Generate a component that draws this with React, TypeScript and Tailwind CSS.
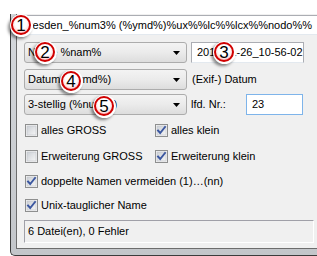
import React from "react";

function Badge({ n, x, y }: { n: number; x: number; y: number }) {
  return (
    <div
      className="absolute w-[23px] h-[23px] rounded-full bg-white shadow-[-2px_2px_3px_rgba(0,0,0,0.45)] p-[1.5px]"
      style={{ left: x - 11.5, top: y - 11.5 }}
    >
      <div className="w-full h-full rounded-full border-[2px] border-[#d00000] bg-[radial-gradient(circle_at_50%_40%,#ffffff_45%,#ffe0e0_65%,#f04040_100%)] flex items-center justify-center">
        <span className="text-[17px] leading-none text-black font-['Liberation_Sans',Arial,sans-serif] mt-[1px]">{n}</span>
      </div>
    </div>
  );
}

function Arrow() {
  return (
    <svg width="7" height="4" viewBox="0 0 7 4" className="shrink-0">
      <path d="M0 0 H7 L3.5 4 Z" fill="#000" />
    </svg>
  );
}

function Combo({ text }: { text: string }) {
  return (
    <div className="w-[163px] h-[21px] shrink-0 border border-[#acacac] rounded-[3px] bg-gradient-to-b from-[#f3f3f3] via-[#ebebeb] to-[#dddddd] flex items-center pl-[3px] pr-[6px]">
      <span className="flex-1 whitespace-nowrap overflow-hidden">{text}</span>
      <Arrow />
    </div>
  );
}

function Check({ checked }: { checked: boolean }) {
  return (
    <svg width="13" height="13" viewBox="0 0 13 13" className="shrink-0">
      <defs>
        <linearGradient id="cbg" x1="0" y1="0" x2="1" y2="1">
          <stop offset="0" stopColor="#cbcfd5" />
          <stop offset="1" stopColor="#f6f6f6" />
        </linearGradient>
      </defs>
      <rect x="0.5" y="0.5" width="12" height="12" fill="#f4f4f4" stroke="#8e8f8f" />
      <rect x="2" y="2" width="9" height="9" fill="url(#cbg)" stroke="#c0c4ca" strokeWidth="0.6" />
      {checked && (
        <path d="M3 6.5 L5.2 9 L10 3" fill="none" stroke="#3b57a0" strokeWidth="1.9" strokeLinecap="square" />
      )}
    </svg>
  );
}

function CB({ label, checked }: { label: string; checked: boolean }) {
  return (
    <div className="flex items-center h-[13px] whitespace-nowrap">
      <Check checked={checked} />
      <span className="ml-[3px]">{label}</span>
    </div>
  );
}

export default function App() {
  return (
    <div className="w-[317px] h-[256px] bg-white overflow-hidden relative font-['Liberation_Sans',Arial,sans-serif] text-[11px] text-black leading-none">
      <div className="pt-[14px] pl-[10px]">
        {/* window */}
        <div className="w-[340px] h-[242px] border-l border-b border-[#3c3c3c] rounded-bl-[5px] bg-gradient-to-b from-[#d5d8dc] to-[#c3c6ca] pl-[5px] pb-[6px]">
          <div className="h-full bg-[#f0f0f0] border-l border-b border-[#6d6d6d] pl-[7px] flex flex-col">
            {/* field 1 */}
            <div className="mt-[1px] h-[20px] w-[320px] bg-white border border-[#abadb3] border-b-[#e3e9ef] flex items-center overflow-hidden">
              <span className="ml-[-4px] whitespace-nowrap">Dresden_%num3% (%ymd%)%ux%%lc%%lcx%%nodo%%</span>
            </div>
            {/* row 2 */}
            <div className="mt-[7px] flex items-center h-[21px]">
              <Combo text="Name %nam%" />
              <div className="ml-[4px] w-[113px] h-[21px] bg-white border border-[#abadb3] border-b-[#e3e9ef] flex items-center pl-[5px]">
                2012-11-26_10-56-02
              </div>
            </div>
            {/* row 3 */}
            <div className="mt-[6px] flex items-center h-[21px]">
              <Combo text="Datum (%ymd%)" />
              <span className="ml-[5px]">(Exif-) Datum</span>
            </div>
            {/* row 4 */}
            <div className="mt-[4px] flex items-center h-[21px]">
              <Combo text="3-stellig (%num%)" />
              <span className="ml-[4px] w-[55px]">lfd. Nr.:</span>
              <div className="w-[57px] h-[21px] bg-white border border-[#7eb4ea] flex items-center pl-[5px]">23</div>
            </div>
            {/* checkboxes */}
            <div className="mt-[9px] ml-[1px] grid grid-cols-[130px_1fr]">
              <CB label="alles GROSS" checked={false} />
              <CB label="alles klein" checked={true} />
            </div>
            <div className="mt-[13px] ml-[1px] grid grid-cols-[130px_1fr]">
              <CB label="Erweiterung GROSS" checked={false} />
              <CB label="Erweiterung klein" checked={true} />
            </div>
            <div className="mt-[12px] ml-[1px]">
              <CB label="doppelte Namen vermeiden (1)…(nn)" checked={true} />
            </div>
            <div className="mt-[11px] ml-[1px]">
              <CB label="Unix-tauglicher Name" checked={true} />
            </div>
            {/* status */}
            <div className="mt-[8px] w-[290px] h-[23px] border border-[#a0a0a8] border-r-white border-b-white flex items-center pl-[3px]">
              6 Datei(en), 0 Fehler
            </div>
          </div>
        </div>
      </div>
      <Badge n={1} x={21} y={25} />
      <Badge n={2} x={45} y={52} />
      <Badge n={3} x={224} y={52} />
      <Badge n={4} x={71} y={81} />
      <Badge n={5} x={104} y={106} />
    </div>
  );
}
